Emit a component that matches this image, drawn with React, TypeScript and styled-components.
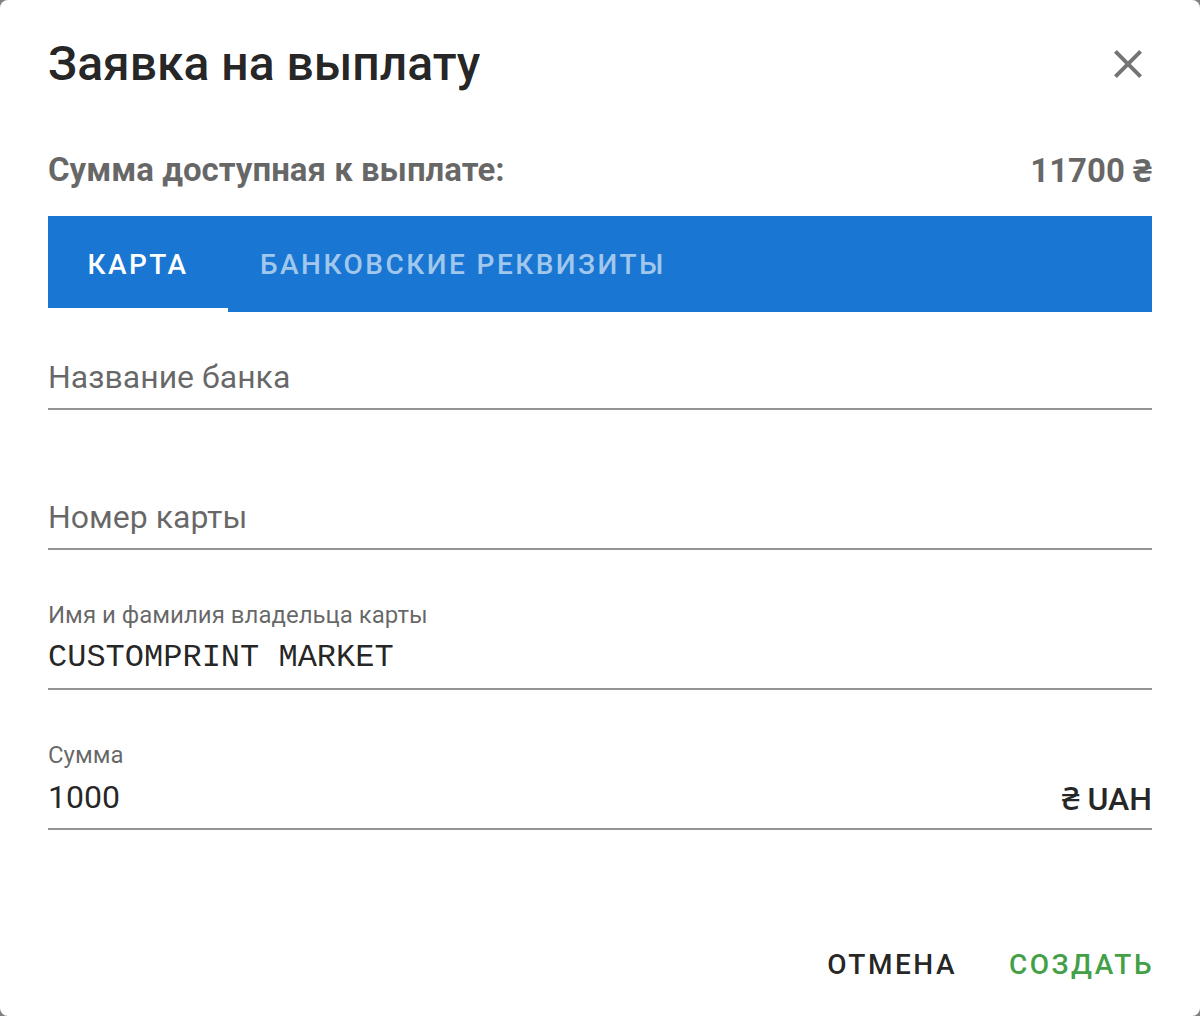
import React from 'react';
import styled, { createGlobalStyle } from 'styled-components';

const colors = {
    backdrop: '#808080',
    paper: '#ffffff',
    textPrimary: 'rgba(0, 0, 0, 0.87)',
    textSecondary: 'rgba(0, 0, 0, 0.6)',
    icon: 'rgba(0, 0, 0, 0.54)',
    underline: 'rgba(0, 0, 0, 0.42)',
    primary: '#1976d2',
    success: '#43a047',
};

const GlobalStyle = createGlobalStyle`
    html, body {
        margin: 0;
        padding: 0;
        background: ${colors.backdrop};
    }
    * {
        box-sizing: border-box;
    }
`;

const Dialog = styled.div`
    width: 1200px;
    height: 1016px;
    background: ${colors.paper};
    border-radius: 8px;
    display: flex;
    flex-direction: column;
    font-family: Roboto, 'Noto Sans', sans-serif;
    overflow: hidden;
`;

const TitleRow = styled.div`
    height: 128px;
    padding: 0 48px;
    display: flex;
    align-items: center;
    justify-content: space-between;
`;

const Title = styled.h2`
    margin: 0;
    font-size: 48px;
    font-weight: 500;
    line-height: 64px;
    color: ${colors.textPrimary};
`;

const CloseButton = styled.button`
    width: 48px;
    height: 48px;
    padding: 0;
    border: 0;
    background: none;
    color: ${colors.icon};
    display: flex;
    cursor: pointer;
`;

const Content = styled.div`
    padding: 0 48px;
    display: flex;
    flex-direction: column;
`;

const SumRow = styled.div`
    display: flex;
    justify-content: space-between;
    align-items: center;
    height: 48px;
    margin: 17px 0 23px;
    font-size: 33px;
    font-weight: 700;
    color: ${colors.textSecondary};
`;

const TabBar = styled.div`
    display: flex;
    height: 96px;
    background: ${colors.primary};
`;

const Tab = styled.button<{ $active?: boolean; $wide?: boolean }>`
    position: relative;
    height: 100%;
    border: 0;
    background: none;
    padding: ${p => (p.$wide ? '0 32px' : '0')};
    min-width: ${p => (p.$wide ? '0' : '180px')};
    font-family: inherit;
    font-size: 28px;
    font-weight: 500;
    letter-spacing: 0.088em;
    text-transform: uppercase;
    color: ${p => (p.$active ? '#ffffff' : 'rgba(255, 255, 255, 0.6)')};
    cursor: pointer;

    &::after {
        content: '';
        position: absolute;
        left: 0;
        right: 0;
        bottom: 0;
        height: 4px;
        background: ${p => (p.$active ? '#ffffff' : 'transparent')};
    }
`;

const Field = styled.label<{ $first?: boolean }>`
    display: flex;
    flex-direction: column;
    padding-top: ${p => (p.$first ? '7px' : '49px')};
`;

const FieldLabel = styled.span`
    height: 32px;
    line-height: 32px;
    font-size: 24px;
    color: ${colors.textSecondary};
`;

const InputRow = styled.div`
    height: 59px;
    padding: 7px 0 12px;
    display: flex;
    align-items: center;
    border-bottom: 2px solid ${colors.underline};
`;

const Input = styled.input<{ $mono?: boolean }>`
    flex: 1;
    min-width: 0;
    height: 38px;
    padding: 0;
    border: 0;
    outline: none;
    background: none;
    font-family: ${p => (p.$mono ? "'Liberation Mono', 'DejaVu Sans Mono', monospace" : 'inherit')};
    font-size: 32px;
    color: ${colors.textPrimary};

    &::placeholder {
        color: ${colors.textSecondary};
        opacity: 1;
    }
`;

const Adornment = styled.span`
    font-size: 32px;
    font-weight: 500;
    color: ${colors.textPrimary};
    white-space: nowrap;
`;

const Actions = styled.div`
    margin-top: auto;
    padding: 16px 30px 16px 0;
    display: flex;
    justify-content: flex-end;
    gap: 20px;
`;

const ActionButton = styled.button<{ $color: string }>`
    height: 72px;
    padding: 0 16px;
    border: 0;
    background: none;
    font-family: inherit;
    font-size: 28px;
    font-weight: 500;
    letter-spacing: 0.09em;
    text-transform: uppercase;
    color: ${p => p.$color};
    cursor: pointer;
`;

const CloseIcon = () => (
    <svg width="48" height="48" viewBox="0 0 24 24" fill="currentColor">
        <path d="M19 6.41 17.59 5 12 10.59 6.41 5 5 6.41 10.59 12 5 17.59 6.41 19 12 13.41 17.59 19 19 17.59 13.41 12z" />
    </svg>
);

type FieldProps = {
    label?: string;
    placeholder?: string;
    value?: string;
    mono?: boolean;
    first?: boolean;
    adornment?: string;
};

const TextField = ({ label, placeholder, value, mono, first, adornment }: FieldProps) => (
    <Field $first={first}>
        <FieldLabel>{label}</FieldLabel>
        <InputRow>
            <Input $mono={mono} placeholder={placeholder} defaultValue={value} />
            {adornment && <Adornment>{adornment}</Adornment>}
        </InputRow>
    </Field>
);

const App = () => {
    return (
        <>
            <GlobalStyle />
            <Dialog>
                <TitleRow>
                    <Title>Заявка на выплату</Title>
                    <CloseButton aria-label="close">
                        <CloseIcon />
                    </CloseButton>
                </TitleRow>
                <Content>
                    <SumRow>
                        <span>Сумма доступная к выплате:</span>
                        <span>11700 ₴</span>
                    </SumRow>
                    <TabBar>
                        <Tab $active>Карта</Tab>
                        <Tab $wide>Банковские реквизиты</Tab>
                    </TabBar>
                    <TextField first placeholder="Название банка" />
                    <TextField placeholder="Номер карты" />
                    <TextField label="Имя и фамилия владельца карты" value="CUSTOMPRINT MARKET" mono />
                    <TextField label="Сумма" value="1000" adornment="₴ UAH" />
                </Content>
                <Actions>
                    <ActionButton $color={colors.textPrimary}>Отмена</ActionButton>
                    <ActionButton $color={colors.success}>Создать</ActionButton>
                </Actions>
            </Dialog>
        </>
    );
};

export default App;
